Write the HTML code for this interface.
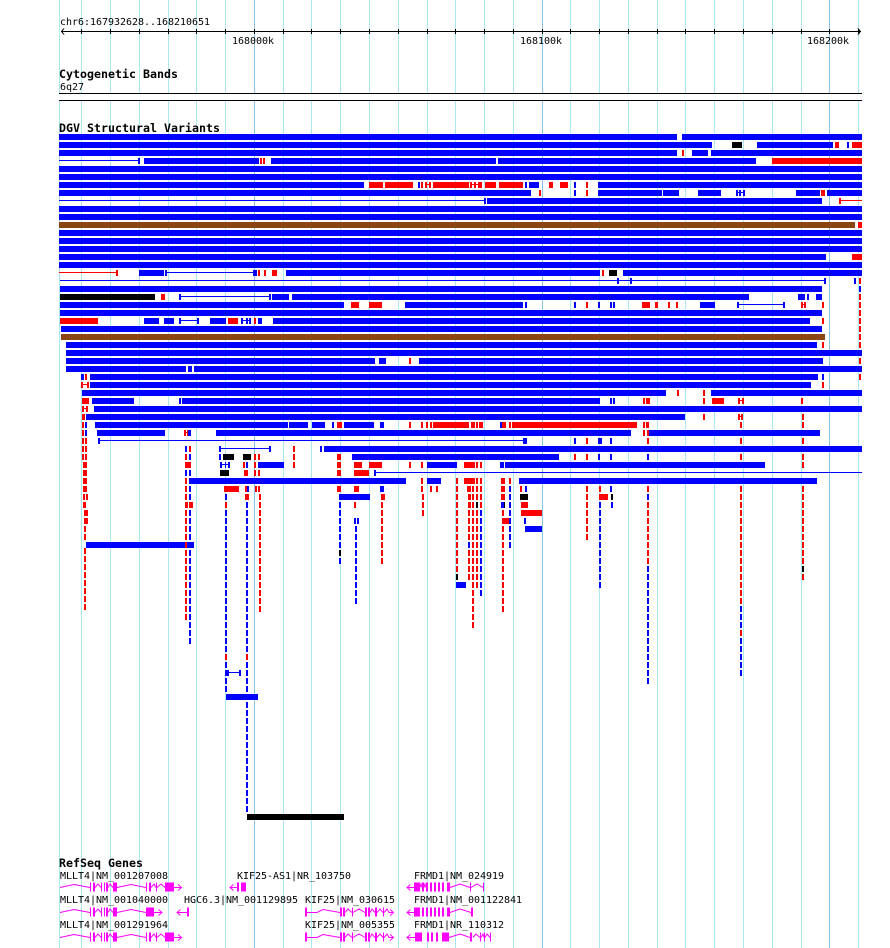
<!DOCTYPE html>
<html><head><meta charset="utf-8"><title>GBrowse</title>
<style>
html,body{margin:0;padding:0;background:#fff;width:890px;height:948px;overflow:hidden}
svg{display:block;position:absolute;left:0;top:0}
path{fill:none;shape-rendering:crispEdges}
.b{stroke:#00f;stroke-width:6}
.r{stroke:#f00;stroke-width:6}
.k{stroke:#000;stroke-width:6}
.n{stroke:#8b4513;stroke-width:6}
.bl{stroke:#00f;stroke-width:1}
.rl{stroke:#f00;stroke-width:1}
.vb{stroke:#00f;stroke-width:2;stroke-dasharray:6 2}
.vr{stroke:#f00;stroke-width:2;stroke-dasharray:6 2}
.g{stroke:#a8e8ee;stroke-width:1}
.gd{stroke:#88c4e8;stroke-width:1}
.m{stroke:#f0f;stroke-width:1;shape-rendering:auto}
.mx{stroke:#f0f;stroke-width:9}
text{font-family:"DejaVu Sans Mono","Liberation Mono",monospace;font-size:10px;fill:#000}
text.h{font-weight:bold;font-size:11.63px}
</style></head><body>
<svg width="890" height="948" viewBox="0 0 890 948" xmlns="http://www.w3.org/2000/svg">
<!-- grid -->
<path class="g" d="M59.5 0V93M81.5 0V93M110.5 0V93M139.5 0V93M168.5 0V93M196.5 0V93M225.5 0V93M283.5 0V93M311.5 0V93M340.5 0V93M369.5 0V93M398.5 0V93M427.5 0V93M455.5 0V93M484.5 0V93M513.5 0V93M570.5 0V93M599.5 0V93M628.5 0V93M657.5 0V93M685.5 0V93M714.5 0V93M743.5 0V93M772.5 0V93M801.5 0V93M858.5 0V93"/>
<path class="g" d="M59.5 101V948M81.5 101V948M110.5 101V948M139.5 101V948M168.5 101V948M196.5 101V948M225.5 101V948M283.5 101V948M311.5 101V948M340.5 101V948M369.5 101V948M398.5 101V948M427.5 101V948M455.5 101V948M484.5 101V948M513.5 101V948M570.5 101V948M599.5 101V948M628.5 101V948M657.5 101V948M685.5 101V948M714.5 101V948M743.5 101V948M772.5 101V948M801.5 101V948M858.5 101V948"/>
<path class="gd" d="M254.5 0V93M542.5 0V93M829.5 0V93M254.5 101V948M542.5 101V948M829.5 101V948"/>
<!-- ruler -->
<path stroke="#000" stroke-width="1" d="M61 31.5H861M64 28.5L61.5 31.5L64 34.5M858 28.5L860.5 31.5L858 34.5"/>
<path stroke="#000" stroke-width="1" d="M81.5 29V34M110.5 29V34M139.5 29V34M168.5 29V34M196.5 29V34M225.5 29V34M254.5 29V34M283.5 29V34M311.5 29V34M340.5 29V34M369.5 29V34M398.5 29V34M427.5 29V34M455.5 29V34M484.5 29V34M513.5 29V34M542.5 29V34M570.5 29V34M599.5 29V34M628.5 29V34M657.5 29V34M685.5 29V34M714.5 29V34M743.5 29V34M772.5 29V34M801.5 29V34M829.5 29V34M858.5 29V34"/>
<text x="60" y="25" textLength="150">chr6:167932628..168210651</text>
<text x="232" y="44" textLength="42">168000k</text>
<text x="520" y="44" textLength="42">168100k</text>
<text x="807" y="44" textLength="42">168200k</text>
<text class="h" x="59" y="78" textLength="119">Cytogenetic Bands</text>
<text x="60" y="90" textLength="24">6q27</text>
<path stroke="#000" stroke-width="1" d="M59 93.5H862M59 100.5H862"/>
<text class="h" x="59" y="132" textLength="161">DGV Structural Variants</text>
<!-- rows -->
<path class="b" d="M59 137H677M682 137H862"/>
<path class="b" d="M59 145H712M757 145H833M847 145H849"/><path class="k" d="M732 145H742"/><path class="r" d="M835 145H839M852 145H862"/>
<path class="b" d="M59 153H677M692 153H708M711 153H862"/><path class="r" d="M682 153H684"/>
<path class="bl" d="M59 160.5H138"/><path class="b" d="M138 161H140M144 161H259M271 161H496M498 161H756"/><path class="r" d="M260 161H262M263 161H265M772 161H862"/>
<path class="b" d="M59 169H862M59 177H862"/>
<path class="b" d="M59 185H364M418 185H420M525 185H527M529 185H539M574 185H576M598 185H862"/><path class="r" d="M369 185H383M385 185H413M421 185H423M425 185H427M429 185H431M433 185H469M470 185H472M474 185H476M478 185H482M485 185H496M499 185H523M549 185H553M560 185H568M586 185H588"/><path class="rl" d="M425 184.5H431M470 184.5H482"/>
<path class="b" d="M59 193H531M574 193H576M598 193H662M663 193H679M698 193H721M736 193H738M739 193H741M743 193H745M796 193H820M827 193H862"/><path class="r" d="M539 193H541M586 193H588M821 193H825"/><path class="bl" d="M736 192.5H745"/>
<path class="bl" d="M59 200.5H484"/><path class="b" d="M484 201H486M487 201H822"/><path class="r" d="M839 201H841"/><path class="rl" d="M841 200.5H862"/>
<path class="b" d="M59 209H862M59 217H862"/>
<path class="n" d="M59 225H855"/><path class="r" d="M858 225H862"/>
<path class="b" d="M59 233H862M59 241H862M59 249H862"/>
<path class="b" d="M59 257H826"/><path class="r" d="M852 257H862"/>
<path class="b" d="M59 265H862"/>
<path class="rl" d="M59 272.5H116"/><path class="r" d="M116 273H118M258 273H260M264 273H266M272 273H277M602 273H604"/><path class="b" d="M139 273H164M165 273H167M253 273H257M286 273H600M623 273H862"/><path class="bl" d="M167 272.5H253"/><path class="k" d="M609 273H617"/>
<path class="bl" d="M60 280.5H617M619 280.5H630M632 280.5H825"/><path class="b" d="M617 281H619M630 281H632M824 281H826M854 281H856"/><path class="r" d="M859 281H861"/>
<path class="b" d="M60 289H822M859 289H861"/>
<path class="k" d="M60 297H155"/><path class="r" d="M161 297H165M859 297H861"/><path class="b" d="M179 297H181M269 297H271M272 297H289M292 297H749M798 297H805M807 297H809M816 297H822"/><path class="bl" d="M181 296.5H269"/>
<path class="b" d="M60 305H344M405 305H523M525 305H527M574 305H576M598 305H600M610 305H612M613 305H615M700 305H715M737 305H739M783 305H785"/><path class="r" d="M351 305H359M369 305H382M586 305H588M642 305H650M655 305H658M668 305H670M676 305H678M801 305H803M804 305H806M822 305H824M859 305H861"/><path class="bl" d="M739 304.5H783"/><path class="rl" d="M801 304.5H806"/>
<path class="b" d="M60 313H822"/><path class="r" d="M859 313H861"/>
<path class="r" d="M60 321H98M228 321H238M254 321H256M822 321H824M859 321H861"/><path class="b" d="M144 321H159M164 321H174M179 321H181M197 321H199M210 321H226M241 321H243M246 321H248M249 321H251M258 321H262M273 321H810"/><path class="bl" d="M181 320.5H197M243 320.5H249"/>
<path class="b" d="M61 329H822"/><path class="r" d="M859 329H861"/>
<path class="n" d="M61 337H825"/><path class="r" d="M859 337H861"/>
<path class="b" d="M66 345H817"/><path class="r" d="M822 345H824M859 345H861"/>
<path class="b" d="M66 353H862"/>
<path class="b" d="M66 361H375M379 361H386M419 361H823"/><path class="r" d="M409 361H411M859 361H861"/>
<path class="b" d="M66 369H186M188 369H192M194 369H862"/>
<path class="b" d="M81 377H84M90 377H818M822 377H824"/><path class="r" d="M85 377H87M859 377H861"/>
<path class="r" d="M81 385H83M87 385H89M822 385H824"/><path class="rl" d="M81 384.5H89"/><path class="b" d="M90 385H811"/>
<path class="b" d="M82 393H666M711 393H862"/><path class="r" d="M677 393H679M703 393H705"/>
<path class="r" d="M82 401H89M643 401H645M646 401H650M703 401H705M712 401H724M738 401H740M742 401H744M801 401H803"/><path class="rl" d="M738 400.5H744"/><path class="b" d="M92 401H134M179 401H181M182 401H600M610 401H612M613 401H615"/>
<path class="r" d="M82 409H84M86 409H88"/><path class="rl" d="M82 408.5H88"/><path class="b" d="M94 409H862"/>
<path class="r" d="M82 417H85M703 417H705M738 417H740M741 417H743M802 417H804"/><path class="rl" d="M738 416.5H743"/><path class="b" d="M86 417H685"/>
<path class="r" d="M82 425H84M337 425H342M409 425H411M421 425H423M426 425H428M430 425H432M433 425H469M471 425H475M476 425H478M479 425H483M502 425H506M509 425H511M512 425H637M643 425H645M646 425H649M740 425H742M802 425H804"/><path class="b" d="M85 425H87M95 425H288M289 425H308M312 425H325M332 425H334M344 425H374M380 425H384M500 425H502"/>
<path class="r" d="M82 433H84M184 433H186M187 433H188M643 433H645M647 433H649"/><path class="rl" d="M184 432.5H188"/><path class="b" d="M85 433H87M97 433H165M188 433H191M216 433H631M649 433H820"/>
<path class="r" d="M82 441H84M85 441H87M586 441H588M647 441H649M740 441H742M802 441H804"/><path class="b" d="M98 441H100M523 441H527M574 441H576M598 441H602M610 441H612"/><path class="bl" d="M100 440.5H523"/>
<path class="r" d="M82 449H84M85 449H87M189 449H191M293 449H295M647 449H649M740 449H742M802 449H804"/><path class="b" d="M185 449H187M219 449H221M269 449H271M320 449H322M324 449H862M610 449H612"/><path class="bl" d="M221 448.5H269"/>
<path class="r" d="M82 457H84M85 457H87M185 457H187M254 457H256M258 457H260M293 457H295M337 457H341M574 457H576M586 457H588M740 457H742M802 457H804"/><path class="b" d="M189 457H191M219 457H221M352 457H559M598 457H600M610 457H612M647 457H649"/><path class="k" d="M223 457H234M243 457H251"/>
<path class="r" d="M83 465H87M185 465H191M243 465H245M254 465H256M293 465H295M337 465H341M354 465H362M369 465H382M409 465H411M421 465H423M464 465H475M476 465H478M480 465H482M802 465H804"/><path class="b" d="M220 465H222M225 465H226M228 465H230M246 465H248M258 465H284M427 465H457M500 465H504M505 465H765"/><path class="bl" d="M220 464.5H230"/>
<path class="r" d="M83 473H87M244 473H248M254 473H256M258 473H260M337 473H341M354 473H369"/><path class="b" d="M185 473H187M189 473H191M374 473H376"/><path class="k" d="M220 473H229"/><path class="bl" d="M376 472.5H862"/>
<path class="r" d="M83 481H87M185 481H187M421 481H423M456 481H458M464 481H475M476 481H478M480 481H482M501 481H505M509 481H511"/><path class="b" d="M189 481H406M427 481H441M519 481H817"/>
<path class="r" d="M83 489H87M185 489H187M224 489H239M245 489H247M255 489H257M258 489H260M337 489H341M354 489H359M421 489H423M430 489H432M436 489H438M456 489H458M467 489H471M472 489H474M476 489H478M480 489H482M501 489H505M520 489H522M586 489H588M599 489H601M647 489H649M740 489H742M802 489H804"/><path class="b" d="M189 489H191M247 489H249M380 489H384M509 489H511M525 489H527M610 489H612"/>
<path class="r" d="M83 497H85M86 497H88M185 497H187M245 497H249M259 497H261M381 497H385M422 497H424M456 497H458M468 497H471M472 497H474M476 497H478M480 497H482M501 497H505M586 497H588M599 497H608M740 497H742M802 497H804"/><path class="b" d="M189 497H191M225 497H227M339 497H370M509 497H511M647 497H649"/><path class="k" d="M520 497H528M611 497H613"/>
<path class="r" d="M83 505H86M185 505H188M189 505H193M225 505H227M259 505H261M354 505H356M381 505H383M422 505H424M456 505H458M468 505H471M472 505H474M480 505H482M521 505H528M586 505H588M647 505H649M740 505H742M802 505H804"/><path class="b" d="M246 505H248M339 505H341M501 505H504M509 505H511M599 505H601M611 505H613"/><path class="k" d="M476 505H478M504 505H505"/>
<!-- lower region bars -->
<path class="r" d="M84 513H88M84 521H88M521 513H542M503 521H510"/>
<path class="b" d="M525 529H542M86 545H194M456 585H466M226 697H258M354 521H356M357 521H359"/>
<path class="k" d="M247 817H344"/>
<!-- lower region dashes -->
<path class="vr" d="M85 526V540M85 548V612M186 510V620M260 510V612M382 510V564M423 510V516M457 510V572M469 510V540M469 550V580M473 510V628M477 510V588M503 510V612M587 510V540M648 510V564M741 510V604M741 630V636M803 510V564M803 574V580"/>
<path class="vb" d="M190 510V644M226 510V652M226 662V692M247 510V654M247 662V812M340 510V548M340 558V564M356 526V604M481 510V596M510 510V548M600 510V588M648 566V684M741 606V628M741 638V676M469 542V548M525 518V524"/>
<path class="k" style="stroke-width:2" d="M340 550V556M457 574V580M803 566V572"/>
<path class="vr" style="stroke-dasharray:none" d="M226 654V660M247 654V660"/>
<path class="b" d="M227 673H229M239 673H241"/><path class="bl" d="M229 672.5H239"/>
<!-- genes -->
<text class="h" x="59" y="867" textLength="84">RefSeq Genes</text>
<text x="60" y="879" textLength="108">MLLT4|NM_001207008</text>
<text x="237" y="879" textLength="114">KIF25-AS1|NR_103750</text>
<text x="414" y="879" textLength="90">FRMD1|NM_024919</text>
<text x="60" y="903" textLength="108">MLLT4|NM_001040000</text>
<text x="184" y="903" textLength="114">HGC6.3|NM_001129895</text>
<text x="305" y="903" textLength="90">KIF25|NM_030615</text>
<text x="414" y="903" textLength="108">FRMD1|NM_001122841</text>
<text x="60" y="928" textLength="108">MLLT4|NM_001291964</text>
<text x="305" y="928" textLength="90">KIF25|NM_005355</text>
<text x="414" y="928" textLength="90">FRMD1|NR_110312</text>
<!-- gene row 1 -->
<path class="m" d="M60 887.5L74 884.5L90 887.5M95 887.5L98 884L101 887.5M108 887.5L110 884L113 887.5M117 887.5L131 884.5L146 887.5M151 887.5L154 884L156 887.5M157 887.5L161 884L165 887.5M174 887.5H181M178 884.5L181.5 887.5L178 890.5"/>
<path class="mx" d="M90 887H91M93 887H95M101 887H102M104 887H105M106 887H108M113 887H117M146 887H147M149 887H151M156 887H157M165 887H174"/>
<path class="m" d="M230 887.5H237M233.5 884.5L230 887.5L233.5 890.5"/>
<path class="mx" d="M237 887H239M241 887H246"/>
<path class="m" d="M407 887.5H414M410.5 884.5L407 887.5L410.5 890.5M420 887.5L421 884L422 887.5M424 887.5L425 884L426 887.5M450 887.5L460 884L470 887.5M471 887.5L477 884L483 887.5"/>
<path class="mx" d="M414 887H420M422 887H424M426 887H428M430 887H432M434 887H436M438 887H440M442 887H444M447 887H450M470 887H471M483 887H484"/>
<!-- gene row 2 -->
<path class="m" d="M60 912.5L74 909.5L90 912.5M95 912.5L98 909L101 912.5M108 912.5L110 909L113 912.5M117 912.5L131 909.5L146 912.5M154 912.5H162M158.5 909.5L162 912.5L158.5 915.5"/>
<path class="mx" d="M90 912H91M93 912H95M101 912H102M104 912H105M106 912H108M113 912H117M146 912H154"/>
<path class="m" d="M177 912.5H187M180.5 909.5L177 912.5L180.5 915.5"/>
<path class="mx" d="M187 912H189"/>
<path class="m" d="M306 912.5H317L323 909.5L340 912.5M345 912.5L348 909L352 912.5M353 912.5L359 909L365 912.5M370 912.5L372 909L375 912.5M377 912.5L380 909L383 912.5M384 912.5L387 909L389 912.5H393M390 909.5L393.5 912.5L390 915.5"/>
<path class="mx" d="M305 912H307M340 912H342M343 912H345M352 912H353M365 912H367M368 912H370M375 912H377M383 912H384"/>
<path class="m" d="M407 912.5H414M410.5 909.5L407 912.5L410.5 915.5M450 912.5L460 909L471 912.5"/>
<path class="mx" d="M414 912H420M422 912H424M426 912H428M430 912H432M434 912H436M438 912H440M442 912H444M447 912H450M471 912H473"/>
<!-- gene row 3 -->
<path class="m" d="M60 937.5L74 934.5L90 937.5M95 937.5L98 934L101 937.5M108 937.5L110 934L113 937.5M117 937.5L131 934.5L146 937.5M151 937.5L154 934L156 937.5M157 937.5L161 934L165 937.5M174 937.5H181M178 934.5L181.5 937.5L178 940.5"/>
<path class="mx" d="M90 937H91M93 937H95M101 937H102M104 937H105M106 937H108M113 937H117M146 937H147M149 937H151M156 937H157M165 937H174"/>
<path class="m" d="M306 937.5H317L323 934.5L340 937.5M345 937.5L348 934L352 937.5M353 937.5L359 934L365 937.5M370 937.5L372 934L375 937.5M377 937.5L380 934L383 937.5M384 937.5L387 934L389 937.5H393M390 934.5L393.5 937.5L390 940.5"/>
<path class="mx" d="M305 937H307M340 937H342M343 937H345M352 937H353M365 937H367M368 937H370M375 937H377M383 937H384"/>
<path class="m" d="M407 937.5H415M410.5 934.5L407 937.5L410.5 940.5M449 937.5L460 934L470 937.5M473 937.5L476 934L480 937.5M481 937.5L483 934L484 937.5M485 937.5L487 934L490 937.5"/>
<path class="mx" d="M415 937H422M427 937H429M431 937H433M436 937H438M442 937H449M470 937H472M480 937H481M484 937H485M490 937H491"/>
</svg>
</body></html>
